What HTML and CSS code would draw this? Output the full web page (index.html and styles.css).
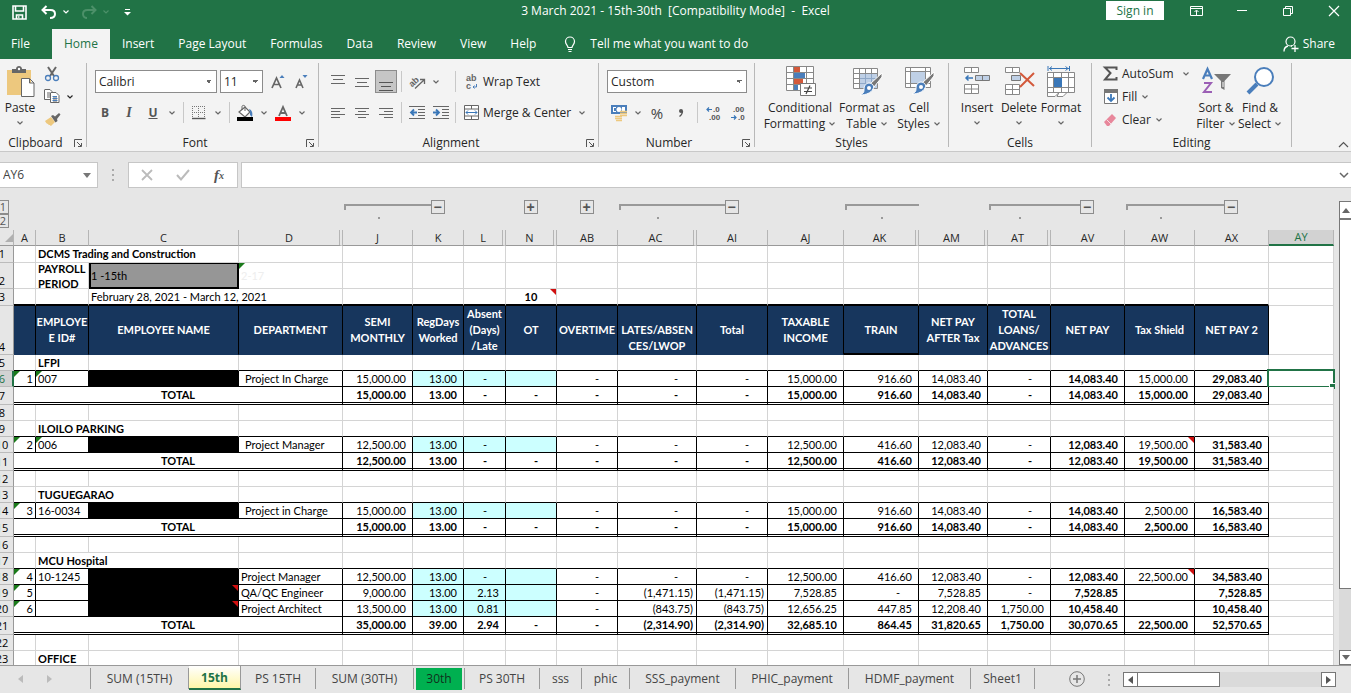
FILE: index.html
```html
<!DOCTYPE html>
<html lang="en">
<head>
<meta charset="utf-8">
<title>3 March 2021 - 15th-30th - Excel</title>
<link rel="stylesheet" href="styles.css">
</head>
<body>
<svg class="defs" aria-hidden="true">
  <symbol id="chev" viewBox="0 0 8 8"><path d="M1.500 2.500 4 5l2.500-2.500" fill="none" stroke="currentColor" stroke-width="1.200"/></symbol>
  <symbol id="launch" viewBox="0 0 9 9"><path d="M.5 8V.5H8M3 3l4 4M7.500 4v3.500H4" fill="none" stroke="#555"/></symbol>
</svg>
<div class="app">
<header class="titlebar">
  <div class="quick">
    <button class="ic" aria-label="Save"><svg width="15" height="15"><path d="M1 1h13v13H1zM3.500 1v5h8V1M4.500 14v-4h6v4M6 12h1.500" fill="none" stroke="#fff" stroke-width="1.600"/></svg></button>
    <button class="ic undo" aria-label="Undo"><svg width="16" height="14"><path d="M5.500 1 1.500 5l4 4M2 5h7.500c3 0 4.500 1.500 4.500 4s-2 4-5 4" fill="none" stroke="#fff" stroke-width="2"/></svg></button>
    <button class="ch" aria-label="Undo list"><svg width="8" height="8"><use href="#chev"/></svg></button>
    <button class="ic redo" aria-label="Redo"><svg width="16" height="14"><path d="M10.500 1l4 4-4 4M14 5H6.500C3.500 5 2 6.500 2 9s2 4 4 4" fill="none" stroke="#4c9069" stroke-width="2"/></svg></button>
    <button class="ch dim" aria-label="Redo list"><svg width="8" height="8"><use href="#chev"/></svg></button>
    <button class="ch custom" aria-label="Customize"><svg width="7" height="8"><path d="M1 1.500h5" stroke="#fff"/><path d="M0 4h7L3.500 7.500z" fill="#fff"/></svg></button>
  </div>
  <h1>3 March 2021 - 15th-30th&nbsp; [Compatibility Mode]&nbsp; -&nbsp; Excel</h1>
  <div class="win">
    <button class="signin">Sign in</button>
    <button aria-label="Ribbon options"><svg width="13" height="10"><path d="M.5.5h12v9H.5zM.5 2.500h12M6.500 9V4.500M4.500 6l2-2 2 2" fill="none" stroke="#fff"/></svg></button>
    <button aria-label="Minimize"><svg width="10" height="10"><path d="M0 4.500h10" stroke="#fff"/></svg></button>
    <button aria-label="Restore"><svg width="10" height="10"><path d="M.5 2.500h7v7h-7zM2.500 2V.5h7v7H8" fill="none" stroke="#fff"/></svg></button>
    <button aria-label="Close"><svg width="10" height="10"><path d="M0 0l10 10M10 0 0 10" stroke="#fff" stroke-width="1.200"/></svg></button>
  </div>
</header>
<nav class="tabs">
  <button class="file">File</button><button class="on">Home</button><button>Insert</button><button>Page Layout</button><button>Formulas</button><button>Data</button><button>Review</button><button>View</button><button>Help</button>
  <button class="tell"><svg width="12" height="16"><path d="M4 11.500c0-2-2.500-3-2.500-6a4.500 4.500 0 0 1 9 0c0 3-2.500 4-2.500 6zM4 13.500h4M4.500 15.500h3" fill="none" stroke="#fff" stroke-width="1.200"/></svg>Tell me what you want to do</button>
  <button class="share"><svg width="16" height="16"><circle cx="7.500" cy="5.500" r="4.500" fill="none" stroke="#fff" stroke-width="1.200"/><path d="M1 15.500c0-3 2-5 4-5.500M8 10h1M12 9v7M8.500 12.500h7" fill="none" stroke="#fff" stroke-width="1.300"/></svg>Share</button>
</nav>
<section class="ribbon">
  <div class="group g-clip">
    <div class="body">
      <button class="big paste"><svg width="29" height="31"><path d="M1 4h24v25H1z" fill="#edc87e"/><path d="M6 7V3h4c0-4 6-4 6 0h4v4z" fill="#666"/><circle cx="13" cy="3" r="1.200" fill="#fff"/><path d="M15.500 12.500h8l4.500 4.500v13.500H15.500zM23.500 12.500V17H28" fill="#fff" stroke="#666"/></svg><span>Paste</span><svg width="8" height="8"><use href="#chev"/></svg></button>
      <div class="stack">
        <button aria-label="Cut"><svg width="16" height="16"><path d="M4 1l6 9M12 1 6 10" stroke="#666" stroke-width="2"/><circle cx="4" cy="12" r="2.500" fill="none" stroke="#4a7ebb" stroke-width="1.300"/><circle cx="12" cy="12" r="2.500" fill="none" stroke="#4a7ebb" stroke-width="1.300"/></svg></button>
        <button aria-label="Copy"><svg width="16" height="15"><path d="M1 .5h5l2 2v8H.5V.5M3 4h3M3 6h3M3 8h3" fill="#fff" stroke="#666"/><path d="M7 3.500h5l3 3v7H6.500v-10M9 8h4M9 10h4M9 12h4" fill="#fff" stroke="#666"/><path d="M8.500 7.500h4.500M8.500 9.500h5M8.500 11.500h5" stroke="#4a7ebb"/></svg><svg width="8" height="8"><use href="#chev"/></svg></button>
        <button aria-label="Format painter"><svg width="17" height="15"><path d="M1 9l6-4 4 5-4 4c-1-1-2 0-3-2-1 0-2-1-3-3z" fill="#edc87e"/><path d="M7 4l2-1 2 1.500L15 1l1.500 1.500L13 7l.5 2-2 1.500z" fill="#666"/></svg></button>
      </div>
    </div>
    <div class="label"><span>Clipboard</span><button aria-label="Clipboard options"><svg width="9" height="9"><use href="#launch"/></svg></button></div>
  </div>
  <div class="group g-font">
    <div class="body rows">
      <div class="row">
        <select class="face" aria-label="Font"><option>Calibri</option></select>
        <select class="size" aria-label="Font size"><option>11</option></select>
        <button class="c24" aria-label="Grow font"><svg width="15" height="15"><path d="M1 14 5.500 4 10 14M2.500 10.500h6" fill="none" stroke="#666" stroke-width="1.700"/><path d="M8.500 4h5L11 1z" fill="#4a7ebb"/></svg></button>
        <button class="c24" aria-label="Shrink font"><svg width="14" height="15"><path d="M1 14 4.500 6 8 14M2 11h5" fill="none" stroke="#666" stroke-width="1.600"/><path d="M7.500 1h5L10 4z" fill="#4a7ebb"/></svg></button>
      </div>
      <div class="row">
        <button class="c24 bold">B</button><button class="c24 ital">I</button><button class="c24 und">U</button><button class="ch" aria-label="Underline styles"><svg width="8" height="8"><use href="#chev"/></svg></button>
        <i class="sep"></i>
        <button class="c24" aria-label="Borders"><svg width="14" height="14"><path d="M.5 0v12M6.500 0v12M12.500 0v12M0 .5h13M0 6.500h13" stroke="#777" stroke-dasharray="1 1"/><path d="M0 12.500h13.500" stroke="#555" stroke-width="1.400"/></svg></button><button class="ch" aria-label="Border styles"><svg width="8" height="8"><use href="#chev"/></svg></button>
        <i class="sep"></i>
        <button class="c24" aria-label="Fill colour"><svg width="18" height="16"><path d="M3 7l6-5 5 5-5 5z" fill="#fff" stroke="#666" stroke-width="1.200"/><path d="M6 5V1.500c0-1.500 3-1.500 3 0V6" fill="none" stroke="#666"/><path d="M13 4c3 1 4 4 3 8l-2-2c0-2 0-4-1-6z" fill="#4a7ebb"/><path d="M1 12h16v4H1z"/></svg></button><button class="ch" aria-label="Fill colours"><svg width="8" height="8"><use href="#chev"/></svg></button>
        <button class="c24" aria-label="Font colour"><svg width="16" height="16"><path d="M4 11 8 2l4 9M5.500 8h5" fill="none" stroke="#666" stroke-width="1.800"/><path d="M0 12h16v4H0z" fill="#f00"/></svg></button><button class="ch" aria-label="Font colours"><svg width="8" height="8"><use href="#chev"/></svg></button>
      </div>
    </div>
    <div class="label"><span>Font</span><button aria-label="Font options"><svg width="9" height="9"><use href="#launch"/></svg></button></div>
  </div>
  <div class="group g-align">
    <div class="body rows">
      <div class="row">
        <button class="c24" aria-label="Top align"><svg width="14" height="16"><path d="M0 1.500h14M2 5.500h10M0 9.500h14" stroke="#666"/></svg></button>
        <button class="c24" aria-label="Middle align"><svg width="14" height="16"><path d="M0 4.500h14M2 8.500h10M0 12.500h14" stroke="#666"/></svg></button>
        <button class="c24 sel" aria-label="Bottom align"><svg width="14" height="18"><path d="M0 9.500h14M2 13.500h10M0 17.500h14" stroke="#555"/></svg></button>
        <i class="sep"></i>
        <button class="c24" aria-label="Orientation"><svg width="17" height="17"><text x="0" y="11" class="ab" transform="rotate(-42 6 9)">ab</text><path d="M6 15.500 15 7M11 6.500h4.500V11" fill="none" stroke="#666" stroke-width="1.300"/></svg></button><button class="ch" aria-label="Orientation list"><svg width="8" height="8"><use href="#chev"/></svg></button>
        <i class="sep wide"></i>
        <button class="cmd"><svg width="15" height="16"><text x="2" y="7" class="ab">ab</text><text x="2" y="15" class="ab">c</text><path d="M12.500 10v3H9M10.500 11.500 9 13l1.500 1.500" fill="none" stroke="#4a7ebb"/></svg>Wrap Text</button>
      </div>
      <div class="row">
        <button class="c24" aria-label="Align left"><svg width="14" height="12"><path d="M0 1.500h14M0 4.500h9M0 7.500h14M0 10.500h9" stroke="#666"/></svg></button>
        <button class="c24" aria-label="Center"><svg width="14" height="12"><path d="M0 1.500h14M3 4.500h8M0 7.500h14M3 10.500h8" stroke="#666"/></svg></button>
        <button class="c24" aria-label="Align right"><svg width="14" height="12"><path d="M0 1.500h14M5 4.500h9M0 7.500h14M5 10.500h9" stroke="#666"/></svg></button>
        <i class="sep"></i>
        <button class="c24" aria-label="Decrease indent"><svg width="16" height="13"><path d="M0 .5h16M9 3.500h7M9 6.500h7M9 9.500h7M0 12.500h16" stroke="#666"/><path d="M1.500 6.500H8M5 3.500l-3 3 3 3" fill="none" stroke="#3a77b8" stroke-width="1.800"/></svg></button>
        <button class="c24" aria-label="Increase indent"><svg width="16" height="13"><path d="M0 .5h16M9 3.500h7M9 6.500h7M9 9.500h7M0 12.500h16" stroke="#666"/><path d="M0 6.500h6.500M3 3.500l3 3-3 3" fill="none" stroke="#3a77b8" stroke-width="1.800"/></svg></button>
        <i class="sep thin"></i>
        <button class="cmd"><svg width="15" height="15"><path d="M.5.5h14v14H.5zM.5 4h14M.5 11h14M7.500.5V4M7.500 11v3.500" fill="#fff" stroke="#666"/><path d="M2 7.500h11M4 5.500l-2 2 2 2M11 5.500l2 2-2 2" fill="none" stroke="#3a77b8"/></svg>Merge &amp; Center</button><button class="ch" aria-label="Merge list"><svg width="8" height="8"><use href="#chev"/></svg></button>
      </div>
    </div>
    <div class="label"><span>Alignment</span><button aria-label="Alignment options"><svg width="9" height="9"><use href="#launch"/></svg></button></div>
  </div>
  <div class="group g-num">
    <div class="body rows">
      <div class="row"><select class="fmt" aria-label="Number format"><option>Custom</option></select></div>
      <div class="row">
        <button class="c24" aria-label="Accounting format"><svg width="17" height="16"><path d="M0 0h16v9H0z" fill="#4a7ebb"/><path d="M2 2h3v1H3v3h2v1H2zM11 2h3v5h-3z" fill="#fff"/><circle cx="8" cy="4.500" r="2.500" fill="#fff"/><path d="M9 6.500h7M9 8.500h7M9 10.500h7M4 11.500h7M4 13.500h7M5 15.500h6" stroke="#edc87e" stroke-width="1.500"/></svg></button><button class="ch" aria-label="Accounting list"><svg width="8" height="8"><use href="#chev"/></svg></button>
        <button class="c24 pct">%</button>
        <button class="c24" aria-label="Comma style"><svg width="8" height="10"><circle cx="4" cy="3" r="2" fill="#555"/><path d="M5.500 3c0 3-1 4-3 5.500" fill="none" stroke="#555" stroke-width="1.300"/></svg></button>
        <i class="sep"></i>
        <button class="c24" aria-label="Increase decimal"><svg width="16" height="16"><text x="7" y="7" class="dec">.0</text><text x="3" y="15" class="dec">.00</text><path d="M1 4.500h5M3 2.500l-2 2 2 2" fill="none" stroke="#3a77b8" stroke-width="1.200"/></svg></button>
        <button class="c24" aria-label="Decrease decimal"><svg width="16" height="16"><text x="3" y="7" class="dec">.00</text><text x="8" y="15" class="dec">.0</text><path d="M1 12.500h5M4 10.500l2 2-2 2" fill="none" stroke="#3a77b8" stroke-width="1.200"/></svg></button>
      </div>
    </div>
    <div class="label"><span>Number</span><button aria-label="Number options"><svg width="9" height="9"><use href="#launch"/></svg></button></div>
  </div>
  <div class="group g-styles">
    <div class="body">
      <button class="big w76"><svg width="31" height="31"><path d="M1.500.5h27v24h-27zM8.500.5v24M21.500.5v24M1.500 6.500h27M1.500 12.500h27M1.500 18.500h27" fill="#fff" stroke="#888"/><path d="M9 1h6v5H9zM9 13h9v5H9z" fill="#d3593b"/><path d="M9 7h11v5H9zM9 19h4v5H9z" fill="#4a7ebb"/><path d="M15.500 17.500h15v12h-15z" fill="#fff" stroke="#777"/><path d="M19 22h8M19 25.500h8M25 19.500l-4 8.500" stroke="#444" stroke-width="1.200"/></svg><span>Conditional<br>Formatting <svg width="8" height="8"><use href="#chev"/></svg></span></button>
      <button class="big w56"><svg width="31" height="31"><path d="M1.500 2.500h24v20h-24zM7.500 2.500v20M13.500 2.500v20M19.500 2.500v20M1.500 7.500h24M1.500 12.500h24M1.500 17.500h24" fill="#fff" stroke="#888"/><path d="M8 8h17v14H8z" fill="#bfd0e6"/><path d="M13.500 8v14M19.500 8v14M8 12.500h17M8 17.500h17" stroke="#8fa8c8"/><path d="M30 7v4l-8 10-4-3z" fill="#777" stroke="#fff"/><path d="M17 17c3 0 6 3 4 6-2 4-7 6-13 6 4-2 4-3 4-6 0-3 2-6 5-6z" fill="#4a7ebb" stroke="#fff"/><circle cx="17" cy="22" r="2" fill="#fff"/></svg><span>Format as<br>Table <svg width="8" height="8"><use href="#chev"/></svg></span></button>
      <button class="big w46"><svg width="31" height="31"><path d="M1.500 1.500h25v20h-25zM6.500 1.500v20M21.500 1.500v20M1.500 5.500h25M1.500 17.500h25" fill="#fff" stroke="#888"/><path d="M7 6h14v11H7z" fill="#bfd0e6"/><path d="M30 6v4l-8 10-4-3z" fill="#777" stroke="#fff"/><path d="M17 16c3 0 6 3 4 6-2 4-7 6-13 6 4-2 4-3 4-6 0-3 2-6 5-6z" fill="#4a7ebb" stroke="#fff"/><circle cx="17" cy="21" r="2" fill="#fff"/></svg><span>Cell<br>Styles <svg width="8" height="8"><use href="#chev"/></svg></span></button>
    </div>
    <div class="label"><span>Styles</span></div>
  </div>
  <div class="group g-cells">
    <div class="body">
      <button class="big w42"><svg width="28" height="31"><path d="M1.500 1.500h14v5h-14zM8.500 1.500v5M1.500 18.500h14v9h-14zM8.500 18.500v9M1.500 23h14" fill="#fff" stroke="#888"/><path d="M12.500 9.500h14v5h-14zM19.500 9.500v5" fill="#bfd0e6" stroke="#777"/><path d="M3 12h7M5.500 9.500 3 12l2.500 2.500" fill="none" stroke="#3a77b8" stroke-width="1.500"/></svg><span>Insert</span><svg width="8" height="8"><use href="#chev"/></svg></button>
      <button class="big w42"><svg width="31" height="31"><path d="M1.500 1.500h14v5h-14zM8.500 1.500v5M1.500 18.500h14v10h-14zM8.500 18.500v10M1.500 23.500h14" fill="#fff" stroke="#888"/><path d="M7.500 9.500h9v5h-9z" fill="#bfd0e6" stroke="#777"/><path d="M16 7l14 13M30 7 16 21" stroke="#d3593b" stroke-width="2"/></svg><span>Delete</span><svg width="8" height="8"><use href="#chev"/></svg></button>
      <button class="big w42"><svg width="29" height="31"><path d="M.5 6.500h27v20H20l-4 4H10l2-4-4 4H.5zM6.500 6.500v20M14.500 6.500v20M21.500 6.500v20M.5 11.500h27M.5 21.500h27M.5 26.500h20" fill="#fff" stroke="#888"/><path d="M7 12h8v9H7z" fill="#3a77b8"/><path d="M1 0v5M22.500 0v5M2 2.500h20M5 .5l-2.500 2L5 4.500M18.500.5l2.500 2-2.500 2" fill="none" stroke="#3a77b8"/></svg><span>Format</span><svg width="8" height="8"><use href="#chev"/></svg></button>
    </div>
    <div class="label"><span>Cells</span></div>
  </div>
  <div class="group g-edit">
    <div class="body">
      <div class="stack list">
        <button><svg width="15" height="15"><path d="M13.500 4V1.500H2L7.500 7 2 13.500h11.500V11" fill="none" stroke="#555" stroke-width="2"/></svg>AutoSum<svg class="far" width="8" height="8"><use href="#chev"/></svg></button>
        <button><svg width="15" height="15"><path d="M1.500.5h13v14h-13z" fill="#fff" stroke="#777"/><path d="M1 0h14v4H1z" fill="#777"/><path d="M8 5v7M4.500 8.500 8 12l3.500-3.500" fill="none" stroke="#3a77b8" stroke-width="1.800"/></svg>Fill<svg width="8" height="8"><use href="#chev"/></svg></button>
        <button><svg width="15" height="14"><path d="M1 9 9 1l4 4-7 8H4z" fill="#e8879b"/><path d="M3.500 6.500 8 11" stroke="#f6dde2"/></svg>Clear<svg width="8" height="8"><use href="#chev"/></svg></button>
      </div>
      <button class="big w44"><svg width="31" height="31"><path d="M2 13 6.500 3 11 13M3.500 9.500h6" fill="none" stroke="#4a7ebb" stroke-width="2.200"/><path d="M3 17h7l-7 9h8" fill="none" stroke="#9b5fb5" stroke-width="2"/><path d="M13 8h17l-6.500 7v9L20 22v-7z" fill="#777"/><path d="M22 16v5" stroke="#fff"/></svg><span>Sort &amp;<br>Filter <svg width="8" height="8"><use href="#chev"/></svg></span></button>
      <button class="big w44"><svg width="29" height="31"><circle cx="18" cy="11" r="9" fill="#fff" stroke="#4a7ebb" stroke-width="2"/><path d="M11 18 2 27" stroke="#4a7ebb" stroke-width="4"/></svg><span>Find &amp;<br>Select <svg width="8" height="8"><use href="#chev"/></svg></span></button>
    </div>
    <div class="label"><span>Editing</span></div>
  </div>
  <button class="collapse" aria-label="Collapse ribbon"><svg width="11" height="7"><path d="M1 6l4.500-4.500L10 6" fill="none" stroke="#555" stroke-width="1.200"/></svg></button>
</section>
<div class="formula">
  <div class="namebox"><input aria-label="Name box" value="AY6"><svg width="8" height="5"><path d="M0 0h8L4 5z" fill="#777"/></svg></div>
  <svg class="grip" width="3" height="12"><path d="M0 0h2v2H0zM0 5h2v2H0zM0 10h2v2H0z" fill="#aaa"/></svg>
  <div class="fx">
    <button aria-label="Cancel"><svg width="12" height="12"><path d="M1 1l10 10M11 1 1 11" stroke="#bbb" stroke-width="1.800"/></svg></button>
    <button aria-label="Enter"><svg width="14" height="12"><path d="M1 6l4 4.500L13 1" fill="none" stroke="#bbb" stroke-width="2"/></svg></button>
    <button class="fn" aria-label="Insert function">f<small>x</small></button>
  </div>
  <input class="bar" aria-label="Formula bar">
  <button class="expand" aria-label="Expand"><svg width="10" height="7"><path d="M1 1l4 4 4-4" fill="none" stroke="#666" stroke-width="1.500"/></svg></button>
</div>
<main class="sheet">
<div class="gridwrap">
<table>
<colgroup><col class="w14"><col class="w22"><col class="w53"><col class="w150"><col class="w104"><col class="w70"><col class="w51"><col class="w42"><col class="w51"><col class="w61"><col class="w79"><col class="w71"><col class="w76"><col class="w75"><col class="w69"><col class="w63"><col class="w74"><col class="w70"><col class="w74"><col class="w65"></colgroup>
<thead>
<tr class="outline"><td><div class="levels"><button>1</button><button>2</button></div></td><td colspan="4"></td>
<td><div class="start"></div></td><td><div class="end"><button>−</button></div></td><td></td><td><div class="plus"><button>+</button></div></td><td><div class="plus"><button>+</button></div></td>
<td><div class="start"></div></td><td><div class="end"><button>−</button></div></td><td></td><td><div class="start"></div></td><td></td>
<td><div class="start"></div></td><td><div class="end"><button>−</button></div></td><td><div class="start"></div></td><td><div class="end"><button>−</button></div></td><td></td></tr>
<tr class="cols"><th class="corner"><svg width="8" height="8"><path d="M8 0v8H0z" fill="#b0b0b0"/></svg></th><th>A</th><th>B</th><th>C</th><th class="hid">D</th><th>J</th><th>K</th><th class="hid">L</th><th class="hid">N</th><th>AB</th><th class="hid">AC</th><th>AI</th><th>AJ</th><th class="hid">AK</th><th class="hid">AM</th><th class="hid">AT</th><th>AV</th><th>AW</th><th>AX</th><th class="cur">AY</th></tr>
</thead>
<tbody>
<tr class="h17"><th><span>1</span></th><td></td><td class="t b" colspan="2">DCMS Trading and Construction</td><td></td><td></td><td></td><td></td><td></td><td></td><td></td><td></td><td></td><td></td><td></td><td></td><td></td><td></td><td></td><td></td></tr>
<tr class="h26"><th class="low"><span>2</span></th><td></td><td class="t b two"><div>PAYROLL PERIOD</div></td><td class="t gray">1 -15th</td><td class="t faint tri">2-17</td><td></td><td></td><td></td><td></td><td></td><td></td><td></td><td></td><td></td><td></td><td></td><td></td><td></td><td></td><td></td></tr>
<tr class="h17 thick"><th><span>3</span></th><td></td><td></td><td class="t" colspan="2">February 28, 2021 - March 12, 2021</td><td></td><td></td><td></td><td class="b ctr note">10</td><td></td><td></td><td></td><td></td><td></td><td></td><td></td><td></td><td></td><td></td><td></td></tr>
<tr class="h49 head"><th class="low"><span>4</span></th><td></td><td>EMPLOYE<br>E ID#</td><td>EMPLOYEE NAME</td><td>DEPARTMENT</td><td>SEMI<br>MONTHLY</td><td>RegDays<br>Worked</td><td>Absent<br>(Days)<br>/Late</td><td>OT</td><td>OVERTIME</td><td class="lowtext">LATES/ABSEN<br>CES/LWOP</td><td>Total</td><td>TAXABLE<br>INCOME</td><td class="ul">TRAIN</td><td>NET PAY<br>AFTER Tax</td><td>TOTAL<br>LOANS/<br>ADVANCES</td><td>NET PAY</td><td>Tax Shield</td><td>NET PAY 2</td><td></td></tr>
<tr class="over"><th><span>5</span></th><td></td><td class="t b">LFPI</td><td></td><td></td><td></td><td></td><td></td><td></td><td></td><td></td><td></td><td></td><td></td><td></td><td></td><td></td><td></td><td></td><td></td></tr>
<tr class="rec"><th class="cur"><span>6</span></th><td class="n tri">1</td><td class="t tri">007</td><td class="k"></td><td class="pl">Project In Charge</td><td>15,000.00</td><td class="c">13.00</td><td class="c d">-</td><td class="c"></td><td class="d">-</td><td class="d">-</td><td class="d">-</td><td>15,000.00</td><td>916.60</td><td>14,083.40</td><td class="d">-</td><td>14,083.40</td><td>15,000.00</td><td>29,083.40</td><td class="active"></td></tr>
<tr class="rec total"><th><span>7</span></th><td colspan="4" class="ctr">TOTAL</td><td>15,000.00</td><td>13.00</td><td class="d">-</td><td class="d">-</td><td class="d">-</td><td class="d">-</td><td class="d">-</td><td>15,000.00</td><td>916.60</td><td>14,083.40</td><td class="d">-</td><td>14,083.40</td><td>15,000.00</td><td>29,083.40</td><td></td></tr>
<tr><th><span>8</span></th><td></td><td></td><td></td><td></td><td></td><td></td><td></td><td></td><td></td><td></td><td></td><td></td><td></td><td></td><td></td><td></td><td></td><td></td><td></td></tr>
<tr class="over"><th><span>9</span></th><td></td><td class="t b" colspan="2">ILOILO PARKING</td><td></td><td></td><td></td><td></td><td></td><td></td><td></td><td></td><td></td><td></td><td></td><td></td><td></td><td></td><td></td><td></td></tr>
<tr class="rec"><th><span>10</span></th><td class="n tri">2</td><td class="t tri">006</td><td class="k"></td><td class="pl">Project Manager</td><td>12,500.00</td><td class="c">13.00</td><td class="c d">-</td><td class="c"></td><td class="d">-</td><td class="d">-</td><td class="d">-</td><td>12,500.00</td><td>416.60</td><td>12,083.40</td><td class="d">-</td><td>12,083.40</td><td class="note">19,500.00</td><td>31,583.40</td><td></td></tr>
<tr class="rec total"><th><span>11</span></th><td colspan="4" class="ctr">TOTAL</td><td>12,500.00</td><td>13.00</td><td class="d">-</td><td class="d">-</td><td class="d">-</td><td class="d">-</td><td class="d">-</td><td>12,500.00</td><td>416.60</td><td>12,083.40</td><td class="d">-</td><td>12,083.40</td><td>19,500.00</td><td>31,583.40</td><td></td></tr>
<tr><th><span>12</span></th><td></td><td></td><td></td><td></td><td></td><td></td><td></td><td></td><td></td><td></td><td></td><td></td><td></td><td></td><td></td><td></td><td></td><td></td><td></td></tr>
<tr class="over"><th><span>13</span></th><td></td><td class="t b" colspan="2">TUGUEGARAO</td><td></td><td></td><td></td><td></td><td></td><td></td><td></td><td></td><td></td><td></td><td></td><td></td><td></td><td></td><td></td><td></td></tr>
<tr class="rec"><th><span>14</span></th><td class="n tri">3</td><td class="t">16-0034</td><td class="k"></td><td class="pl">Project in Charge</td><td>15,000.00</td><td class="c">13.00</td><td class="c d">-</td><td class="c"></td><td class="d">-</td><td class="d">-</td><td class="d">-</td><td>15,000.00</td><td>916.60</td><td>14,083.40</td><td class="d">-</td><td>14,083.40</td><td>2,500.00</td><td>16,583.40</td><td></td></tr>
<tr class="rec total"><th><span>15</span></th><td colspan="4" class="ctr">TOTAL</td><td>15,000.00</td><td>13.00</td><td class="d">-</td><td class="d">-</td><td class="d">-</td><td class="d">-</td><td class="d">-</td><td>15,000.00</td><td>916.60</td><td>14,083.40</td><td class="d">-</td><td>14,083.40</td><td>2,500.00</td><td>16,583.40</td><td></td></tr>
<tr><th><span>16</span></th><td></td><td></td><td></td><td></td><td></td><td></td><td></td><td></td><td></td><td></td><td></td><td></td><td></td><td></td><td></td><td></td><td></td><td></td><td></td></tr>
<tr class="over"><th><span>17</span></th><td></td><td class="t b" colspan="2">MCU Hospital</td><td></td><td></td><td></td><td></td><td></td><td></td><td></td><td></td><td></td><td></td><td></td><td></td><td></td><td></td><td></td><td></td></tr>
<tr class="rec"><th><span>18</span></th><td class="n tri">4</td><td class="t">10-1245</td><td class="k"></td><td class="t">Project Manager</td><td>12,500.00</td><td class="c">13.00</td><td class="c d">-</td><td class="c"></td><td class="d">-</td><td class="d">-</td><td class="d">-</td><td>12,500.00</td><td>416.60</td><td>12,083.40</td><td class="d">-</td><td>12,083.40</td><td class="note">22,500.00</td><td>34,583.40</td><td></td></tr>
<tr class="rec"><th><span>19</span></th><td class="n tri">5</td><td></td><td class="k note"></td><td class="t">QA/QC Engineer</td><td>9,000.00</td><td class="c">13.00</td><td class="c">2.13</td><td class="c"></td><td class="d">-</td><td class="p">(1,471.15)</td><td class="p">(1,471.15)</td><td>7,528.85</td><td class="d">-</td><td>7,528.85</td><td class="d">-</td><td>7,528.85</td><td></td><td>7,528.85</td><td></td></tr>
<tr class="rec"><th><span>20</span></th><td class="n tri">6</td><td></td><td class="k note"></td><td class="t">Project Architect</td><td>13,500.00</td><td class="c">13.00</td><td class="c">0.81</td><td class="c"></td><td class="d">-</td><td class="p">(843.75)</td><td class="p">(843.75)</td><td>12,656.25</td><td>447.85</td><td>12,208.40</td><td>1,750.00</td><td>10,458.40</td><td></td><td>10,458.40</td><td></td></tr>
<tr class="rec total"><th><span>21</span></th><td colspan="4" class="ctr">TOTAL</td><td>35,000.00</td><td>39.00</td><td>2.94</td><td class="d">-</td><td class="d">-</td><td class="p">(2,314.90)</td><td class="p">(2,314.90)</td><td>32,685.10</td><td>864.45</td><td>31,820.65</td><td>1,750.00</td><td>30,070.65</td><td>22,500.00</td><td>52,570.65</td><td></td></tr>
<tr><th><span>22</span></th><td></td><td></td><td></td><td></td><td></td><td></td><td></td><td></td><td></td><td></td><td></td><td></td><td></td><td></td><td></td><td></td><td></td><td></td><td></td></tr>
<tr><th><span>23</span></th><td></td><td class="t b">OFFICE</td><td></td><td></td><td></td><td></td><td></td><td></td><td></td><td></td><td></td><td></td><td></td><td></td><td></td><td></td><td></td><td></td><td></td></tr>
</tbody>
</table>
</div>
<div class="vscroll">
  <button aria-label="Scroll up"><svg width="8" height="5"><path d="M0 5h8L4 0z" fill="#666"/></svg></button>
  <div class="thumb"></div><div class="track"></div>
  <button aria-label="Scroll down"><svg width="8" height="5"><path d="M0 0h8L4 5z" fill="#666"/></svg></button>
</div>
</main>
<footer class="sheets">
  <div class="nav"><button aria-label="Previous sheet"><svg width="5" height="8"><path d="M5 0v8L0 4z" fill="#bbb"/></svg></button><button aria-label="Next sheet"><svg width="5" height="8"><path d="M0 0v8l5-4z" fill="#bbb"/></svg></button></div>
  <button class="s98">SUM (15TH)</button><button class="s52 open">15th</button><button class="s75">PS 15TH</button><button class="s98">SUM (30TH)</button><button class="s51 green"><span>30th</span></button><button class="s75">PS 30TH</button><button class="s42">sss</button><button class="s48">phic</button><button class="s106">SSS_payment</button><button class="s113">PHIC_payment</button><button class="s122">HDMF_payment</button><button class="s64">Sheet1</button>
  <button class="add" aria-label="New sheet"><svg width="16" height="16"><circle cx="8" cy="8" r="7.300" fill="none" stroke="#777"/><path d="M8 4v8M4 8h8" stroke="#777" stroke-width="1.500"/></svg></button>
  <svg class="grip" width="3" height="12"><path d="M0 0h2v2H0zM0 5h2v2H0zM0 10h2v2H0z" fill="#aaa"/></svg>
  <div class="hscroll"><button aria-label="Scroll left"><svg width="5" height="8"><path d="M5 0v8L0 4z" fill="#555"/></svg></button><div class="thumb"></div><div class="track"></div><button aria-label="Scroll right"><svg width="5" height="8"><path d="M0 0v8l5-4z" fill="#555"/></svg></button></div>
</footer>
</div>
</body>
</html>
```
FILE: styles.css
```css
* { box-sizing: border-box; }
body { margin: 0; font: 12px/16px "Open Sans", "Noto Sans", sans-serif; color: #262626; background: #e6e6e6; overflow: hidden; }
button { font: inherit; color: inherit; border: 0; background: none; padding: 0; display: inline-flex; align-items: center; justify-content: center; white-space: nowrap; }
svg { flex: none; overflow: visible; }
.defs { display: none; }
.app { display: flex; flex-direction: column; height: 100vh; }

.titlebar { display: grid; grid-template-columns: 1fr auto 1fr; height: 29px; background: #217346; color: #fff; flex: none; }
.titlebar h1 { margin: 0; font-size: 12px; font-weight: 400; line-height: 22px; }
.quick { display: flex; align-items: center; height: 24px; padding-left: 12px; }
.quick .undo { margin-left: 14px; }
.quick .redo { margin-left: 6px; }
.quick .ch { width: 18px; color: #fff; }
.quick .dim { color: #4c9069; }
.quick .custom { margin-left: 3px; }
.win { display: flex; justify-content: flex-end; align-items: flex-start; }
.win button { width: 46px; height: 21px; }
.win button:last-child { width: 40px; padding-left: 6px; }
.win .signin { width: 58px; height: 19px; background: #fff; color: #217346; margin: 1px 9px 0 0; }

.tabs { display: flex; height: 30px; background: #217346; color: #fff; flex: none; }
.tabs button { padding: 0 12px; }
.tabs .file { padding: 0 22px 0 11px; }
.tabs .on { background: #f3f3f3; color: #217346; }
.tabs .tell { gap: 14px; padding-left: 16px; }
.tabs .share { gap: 4px; margin-left: auto; padding-right: 16px; }

.ribbon { display: flex; background: #f3f3f3; border-bottom: 1px solid #c8c8c8; height: 93px; padding-top: 4px; flex: none; }
.group { display: flex; flex-direction: column; border-right: 1px solid #b8b8b8; height: 84px; flex: none; }
.group .body { display: flex; height: 72px; flex: none; }
.group .rows { flex-direction: column; padding: 7px 0 0 8px; gap: 8px; }
.row { display: flex; align-items: center; height: 23px; }
.label { display: flex; align-items: center; height: 16px; flex: none; }
.label span { flex: 1; text-align: center; }
.label button { width: 15px; }
.g-clip { width: 87px; }
.g-font { width: 232px; }
.g-align { width: 280px; }
.g-num { width: 156px; }
.g-styles { width: 194px; }
.g-cells { width: 143px; }
.g-edit { width: 200px; }
.c24 { width: 24px; height: 23px; }
.ch { width: 14px; color: #666; }
.sep { width: 1px; height: 21px; background: #c8c8c8; margin: 0 4px; }
.g-font .row:last-child { margin-left: -2px; }
.g-font .row:last-child .sep { margin: 0 3px 0 4px; }
.g-align .rows { padding-left: 7px; }
.g-align .sep { margin: 0 3px; }
.g-align .wide { margin: 0 8px 0 12px; }
.g-align .thin { margin: 0 8px 0 2px; }
.sel { background: #c6c6c6; border: 1px solid #8c8c8c; width: 22px; margin: 0 1px; }
.cmd { gap: 4px; }
.cmd + .ch { margin-left: 4px; }
.ab { font: 700 9px "Liberation Sans", sans-serif; fill: #666; }
.dec { font: 700 8px "Liberation Sans", sans-serif; fill: #555; }
.bold, .ital, .und { font-weight: 700; color: #555; }
.ital { font-style: italic; font-family: "Liberation Serif", serif; font-size: 14px; }
.und { text-decoration: underline; }
.pct { font-size: 15px; color: #444; }
select { appearance: none; font: inherit; color: #262626; height: 23px; border: 1px solid #8c8c8c; border-radius: 0; padding: 0 3px; background: #fff conic-gradient(from -45deg at 50% 100%, #666 0 90deg, transparent 0) no-repeat right 5px center / 7px 4px; background-image: linear-gradient(45deg, transparent 50%, #666 50%), linear-gradient(-45deg, transparent 50%, #666 50%); background-size: 3px 3px; background-position: right 7px center, right 4px center; }
.face { width: 122px; margin-right: 3px; }
.size { width: 43px; margin-right: 3px; }
.fmt { width: 140px; }
.big { flex-direction: column; justify-content: flex-start; padding-top: 3px; }
.big > span { line-height: 16px; margin: 3px 0; text-align: center; }
.big use, .list svg:last-child { color: #666; }
.w76 { width: 76px; }
.w56 { width: 58px; }
.w46 { width: 46px; }
.w44 { width: 44px; }
.g-cells .w42 { width: 42px; }
.g-styles .body, .g-cells .body { padding-left: 7px; }
.paste { width: 40px; }
.stack { display: flex; flex-direction: column; align-items: flex-start; gap: 8px; padding: 3px 0 0 4px; }
.stack button { height: 15px; gap: 6px; }
.list { width: 102px; padding: 3px 0 0 11px; }
.list button { gap: 4px; }
.list .far { margin-left: 4px; }
.collapse { margin-left: auto; align-self: flex-end; width: 15px; height: 14px; }

.formula { display: flex; align-items: flex-start; height: 38px; padding-top: 10px; flex: none; }
.namebox { display: flex; align-items: center; width: 98px; height: 26px; border: 1px solid #c6c6c6; border-left: 0; background: #fff; padding-right: 6px; }
.namebox input { border: 0; outline: 0; flex: 1; min-width: 0; font: inherit; color: #444; padding: 0 0 0 3px; }
.formula .grip { margin: 7px 13px 0 14px; }
.fx { display: flex; width: 110px; height: 26px; border: 1px solid #c6c6c6; background: #fff; margin-right: 3px; }
.fx button { flex: 1; }
.fn { font: italic 700 15px "Liberation Serif", serif; color: #555; }
.fn small { font-size: 10px; }
.bar { flex: 1; height: 26px; border: 1px solid #c6c6c6; border-right: 0; background: #fff; border-radius: 0; font: inherit; }
.expand { width: 15px; height: 26px; background: #fff; border: 1px solid #c6c6c6; border-width: 1px 0; }

.sheet { display: flex; flex: 1; min-height: 0; }
.gridwrap { flex: 1; overflow: hidden; }
table { table-layout: fixed; border-collapse: separate; border-spacing: 0; width: 1334px; font: 11px/14px Lato, "Open Sans", sans-serif; color: #000; }
td, th { padding: 0; overflow: hidden; white-space: nowrap; font-weight: 400; }
.w14 { width: 14px; } .w22 { width: 22px; } .w53 { width: 53px; } .w150 { width: 150px; } .w104 { width: 104px; }
.w70 { width: 70px; } .w51 { width: 51px; } .w42 { width: 42px; } .w61 { width: 61px; } .w79 { width: 79px; }
.w71 { width: 71px; } col.w76 { width: 76px; } .w75 { width: 75px; } .w69 { width: 69px; } .w63 { width: 63px; }
.w74 { width: 74px; } .w65 { width: 65px; }

.outline td { height: 40px; vertical-align: top; padding-top: 10px; }
.outline button { width: 14px; height: 14px; border: 1px solid #8c8c8c; font: 700 14px/12px "Liberation Sans", sans-serif; color: #555; }
.levels { margin-left: -8px; display: grid; }
.levels button { width: 17px; height: 14px; padding-left: 5px; font: 11px/12px "Open Sans", sans-serif; }
.start { margin: 4px 0 0 1px; height: 15px; border-top: 2px solid #999; background: linear-gradient(#999, #999) no-repeat 0 0 / 2px 4px; }
.start::after { content: ""; display: block; width: 2px; height: 2px; background: #999; margin: 11px auto 0; }
.end, .plus { display: flex; align-items: flex-start; justify-content: center; padding-right: 2px; }
.end::before, .end::after { content: ""; flex: 1; margin-top: 4px; border-top: 2px solid #999; }
.end::after { border-color: transparent; }

.cols th { height: 16px; border-right: 1px solid #b5b5b5; border-bottom: 1px solid #999; font: 11px/14px "Open Sans", sans-serif; color: #262626; }
.cols .hid { border-right: 4px double #b5b5b5; }
.cols .corner { text-align: right; line-height: 8px; }
.cols .cur { background: #d2d2d2; color: #217346; border-bottom: 2px solid #217346; }

tbody th { background: #e6e6e6; border-right: 1px solid #999; border-bottom: 1px solid #bbb; font: 11px/14px "Open Sans", sans-serif; height: 16px; }
tbody th span { display: block; width: 22px; margin-left: -9px; text-align: center; }
tbody th.low { vertical-align: bottom; }
tbody th.cur { background: #d2d2d2; color: #217346; border-right: 2px solid #217346; }
tbody td { background: #fff; height: 16px; border-right: 1px solid #d4d4d4; border-bottom: 1px solid #d4d4d4; text-align: right; padding-right: 6px; position: relative; }
.h17 td, .h17 th { height: 17px; }
.h26 td, .h26 th { height: 26px; }
.h49 td, .h49 th { height: 49px; }
tbody .t { text-align: left; padding: 0 0 0 2px; }
tbody .b { font-weight: 700; }
tbody .two { white-space: normal; line-height: 15px; }
.two div { margin: -3px 0; }
tbody .ctr { text-align: center; padding: 0; }
tbody .pl { text-align: left; padding: 0 0 0 6px; }
tbody .n { padding-right: 2px; }
tbody .d { padding-right: 18px; }
tbody .p { padding-right: 3px; }
tbody .gray { background: #969696; border: 2px solid #000; border-top-width: 1px; padding-left: 0; }
tbody .faint { color: #eee; }
.thick td:not(:last-child) { border-bottom: 2px solid #000; }
.head td:not(:last-child) { background: #17365d; color: #fff; font-weight: 700; text-align: center; line-height: 16px; border-color: #000; border-bottom-color: #17365d; padding: 0; }
.head .lowtext:not(:last-child) { padding-top: 16px; }
.head td.ul:not(:last-child) { border-bottom: 2px solid #000; }
.over td:not(:last-child) { border-bottom-color: #000; }
.rec td:not(:last-child) { border-color: #000; }
.rec td:nth-last-child(4), .rec td:nth-last-child(2) { font-weight: 700; }
.total td, .total th { height: 18px; }
.total td { font-weight: 700; }
.total td:not(:last-child) { border-bottom: 3px double #000; }
tbody .c { background: #cff; }
tbody .k { background: #000; }
.tri::before, .note::after { content: ""; position: absolute; top: 0; border: 3px solid transparent; }
.tri::before { left: 0; border-top-color: #1a7a1a; border-left-color: #1a7a1a; }
.note::after { right: 0; border-top-color: #d01010; border-right-color: #d01010; }
tbody .active { overflow: visible; }
.active::before { content: ""; position: absolute; inset: -2px; border: 2px solid #217346; }
.active::after { content: ""; position: absolute; right: -2px; bottom: -3px; width: 5px; height: 5px; background: #217346; border: 1px solid #fff; border-width: 1px 0 0 1px; }

.vscroll { display: flex; flex-direction: column; width: 12px; margin-top: 11px; }
.vscroll button { height: 18px; background: #fff; border: 1px solid #777; border-right: 0; }
.vscroll button:last-child { height: 15px; }
.vscroll .thumb { flex: 6; background: #fff; border: 1px solid #777; border-right: 0; }
.vscroll .track { flex: 1; background: #dadada; }

.sheets { display: flex; align-items: stretch; height: 28px; border-top: 1px solid #999; flex: none; color: #444; }
.nav { display: flex; gap: 24px; width: 91px; padding-left: 18px; border-right: 1px solid #999; margin: 2px 0 4px; flex: none; }
.sheets > button { border-right: 1px solid #999; margin: 2px 0 4px; flex: none; }
.sheets .open { background: linear-gradient(#fff, #fff7a8); color: #217346; font-weight: 700; border-bottom: 2px solid #217346; margin: 0 0 3px; padding-top: 2px; }
.sheets .green span { background: #00b050; color: #10301c; width: 46px; line-height: 22px; }
.s98 { width: 98px; } .s52 { width: 52px; } .s75 { width: 75px; } .s51 { width: 51px; } .s42 { width: 42px; } .s48 { width: 48px; }
.s106 { width: 106px; } .s113 { width: 113px; } .s122 { width: 122px; } .s64 { width: 64px; }
.sheets .add { width: 83px; border: 0; }
.sheets .grip { margin: 8px 0 0 -10px; }
.hscroll { display: flex; width: 213px; height: 15px; margin: 6px 15px 0 auto; flex: none; background: #dadada; }
.hscroll button { width: 15px; background: #fff; border: 1px solid #777; }
.hscroll .thumb { width: 82px; background: #fff; border: 1px solid #777; border-left: 0; }
.hscroll .track { flex: 1; }
```
